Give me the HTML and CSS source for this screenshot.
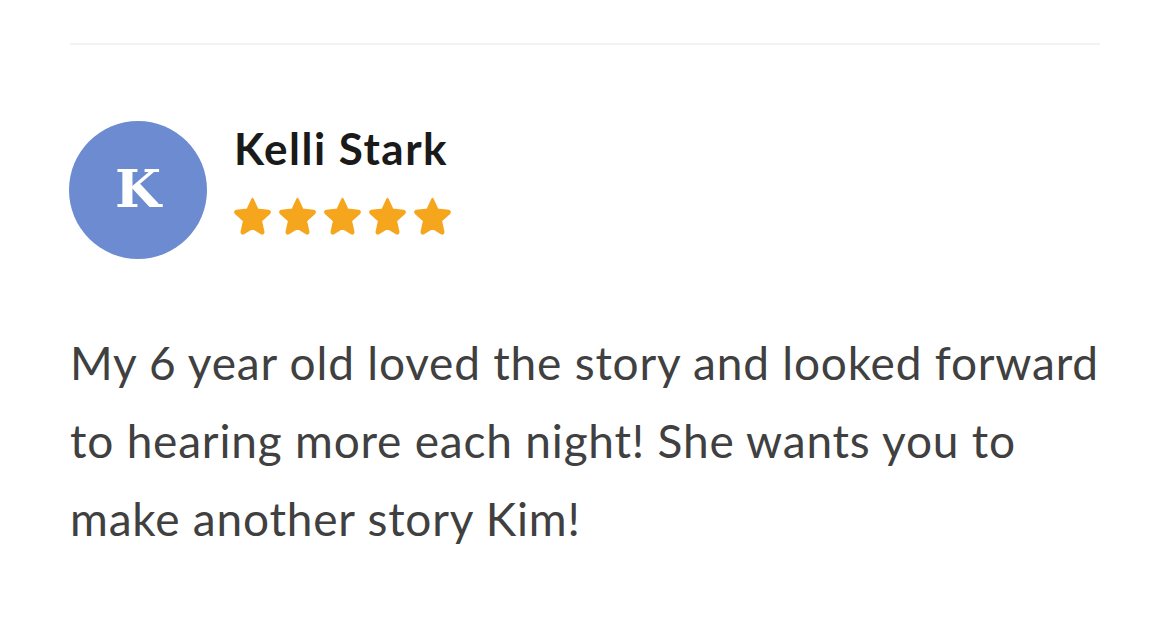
FILE: index.html
```html
<!DOCTYPE html>
<html>
<head>
<meta charset="utf-8">
<link rel="stylesheet" href="styles.css">
</head>
<body>
<div class="review">
  <div class="divider"></div>
  <div class="head">
    <div class="avatar">K</div>
    <div class="meta">
      <div class="name">Kelli Stark</div>
      <div class="stars">
        <svg viewBox="0 0 24 24"><path d="M12 3.2l2.6 5.6 6 .7c.6.1.8.8.4 1.2l-4.5 4.1 1.3 6c.1.6-.5 1-1 .7L12 18.5l-4.8 3c-.5.3-1.1-.1-1-.7l1.3-6-4.5-4.1c-.4-.4-.2-1.1.4-1.2l6-.7 2.6-5.6z"/></svg>
        <svg viewBox="0 0 24 24"><path d="M12 3.2l2.6 5.6 6 .7c.6.1.8.8.4 1.2l-4.5 4.1 1.3 6c.1.6-.5 1-1 .7L12 18.5l-4.8 3c-.5.3-1.1-.1-1-.7l1.3-6-4.5-4.1c-.4-.4-.2-1.1.4-1.2l6-.7 2.6-5.6z"/></svg>
        <svg viewBox="0 0 24 24"><path d="M12 3.2l2.6 5.6 6 .7c.6.1.8.8.4 1.2l-4.5 4.1 1.3 6c.1.6-.5 1-1 .7L12 18.5l-4.8 3c-.5.3-1.1-.1-1-.7l1.3-6-4.5-4.1c-.4-.4-.2-1.1.4-1.2l6-.7 2.6-5.6z"/></svg>
        <svg viewBox="0 0 24 24"><path d="M12 3.2l2.6 5.6 6 .7c.6.1.8.8.4 1.2l-4.5 4.1 1.3 6c.1.6-.5 1-1 .7L12 18.5l-4.8 3c-.5.3-1.1-.1-1-.7l1.3-6-4.5-4.1c-.4-.4-.2-1.1.4-1.2l6-.7 2.6-5.6z"/></svg>
        <svg viewBox="0 0 24 24"><path d="M12 3.2l2.6 5.6 6 .7c.6.1.8.8.4 1.2l-4.5 4.1 1.3 6c.1.6-.5 1-1 .7L12 18.5l-4.8 3c-.5.3-1.1-.1-1-.7l1.3-6-4.5-4.1c-.4-.4-.2-1.1.4-1.2l6-.7 2.6-5.6z"/></svg>
      </div>
    </div>
  </div>
  <p class="text">My 6 year old loved the story and looked forward to hearing more each night! She wants you to make another story Kim!</p>
</div>
</body>
</html>
```

FILE: styles.css
```css
html, body {
  margin: 0;
  padding: 0;
  background: #ffffff;
}
.review {
  width: 1030px;
  margin-left: 70px;
  padding-top: 43px;
}
.divider {
  height: 2px;
  background: #f3f3f3;
}
.head {
  display: flex;
  align-items: flex-start;
  gap: 27px;
  margin-top: 76px;
  margin-left: -1px;
}
.avatar {
  width: 138px;
  height: 138px;
  border-radius: 50%;
  background: #6c8bd0;
  color: #ffffff;
  display: flex;
  align-items: center;
  justify-content: center;
  font-family: "DejaVu Serif", "Liberation Serif", serif;
  font-weight: 700;
  font-size: 53px;
  padding-bottom: 5px;
  box-sizing: border-box;
  flex: none;
}
.meta {
  display: flex;
  flex-direction: column;
  padding-top: 2px;
}
.name {
  font-family: Lato, sans-serif;
  font-weight: 700;
  font-size: 44px;
  letter-spacing: 1.5px;
  line-height: 50px;
  color: #1a1a1a;
}
.stars {
  display: flex;
  margin-top: 20px;
  margin-left: -4px;
}
.stars svg {
  width: 45px;
  height: 45px;
  fill: #f6a61c;
  stroke: #f6a61c;
  stroke-width: 1.2;
  stroke-linejoin: round;
}
.text {
  margin: 65px 0 0 0;
  font-family: Lato, sans-serif;
  font-size: 46px;
  letter-spacing: 0.8px;
  line-height: 78px;
  color: #404040;
}
```
